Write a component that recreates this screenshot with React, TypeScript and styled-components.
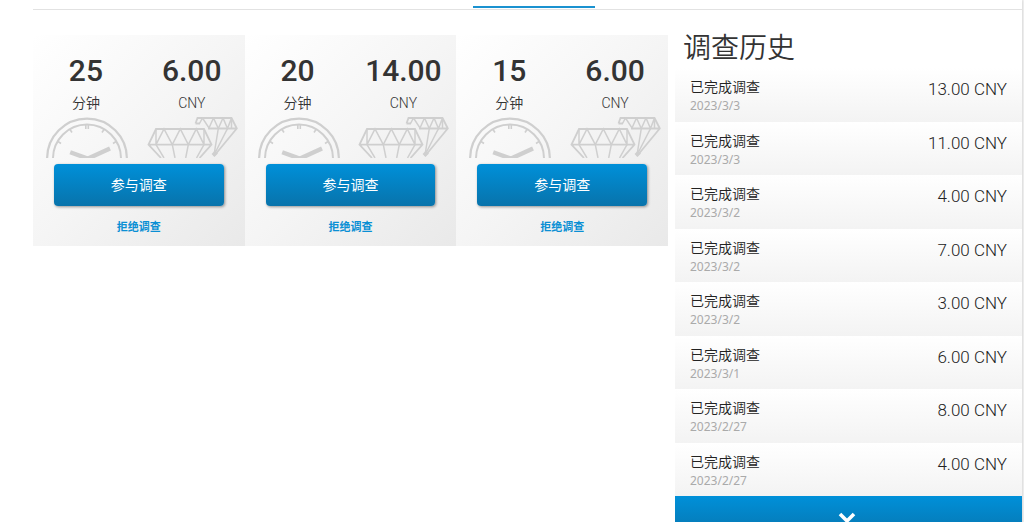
import React from "react";
import styled, { createGlobalStyle } from "styled-components";

const GlobalStyle = createGlobalStyle`
  *, *::before, *::after { box-sizing: border-box; }
  html { scrollbar-width: none; }
  body {
    margin: 0;
    background: #f4f4f4;
    color: #333;
    font-family: Roboto, "Noto Sans CJK SC", sans-serif;
    font-size: 14px;
  }
`;

const Page = styled.div`
  min-height: 100vh;
  margin-right: 2px;
  padding-left: 33px;
  background: #fff;
  box-shadow: 0 0 3px rgba(0, 0, 0, 0.2);
`;

const TabBar = styled.nav`
  display: flex;
  justify-content: center;
  height: 10px;
  padding: 6px 0 1px;
  border-bottom: 1px solid #e2e2e2;
`;

const ActiveTab = styled.a`
  width: 122px;
  height: 2px;
  margin-left: 13px;
  background: #1a92d0;
`;

const Columns = styled.main`
  display: grid;
  grid-template-columns: minmax(0, 635fr) minmax(0, 347fr);
  column-gap: 7px;
  align-items: start;
  padding-top: 20px;
`;

const CardGrid = styled.section`
  display: grid;
  grid-template-columns: repeat(3, 1fr);
  padding-top: 5px;
`;

const Card = styled.article`
  padding: 19px 0 9px;
  background: linear-gradient(135deg, #fff 0%, #f5f5f5 50%, #e9e9e9 100%);
`;

const Stats = styled.div`
  display: grid;
  grid-template-columns: 1fr 1fr;
  text-align: center;
`;

const Figure = styled.div`
  font-size: 30px;
  font-weight: 500;
  line-height: 34px;
`;

const Unit = styled.div`
  height: 29px;
  padding-top: 5px;
  font-size: 14px;
  font-weight: 350;
  line-height: 20px;
`;

const Art = styled.svg`
  display: block;
  height: 41px;
  margin: 0 auto;
  fill: none;
  stroke: #cfcfcf;
`;

const Actions = styled.div`
  display: flex;
  flex-direction: column;
  align-items: stretch;
  gap: 13px;
  padding: 6px 21px 0;
`;

const JoinButton = styled.button`
  height: 42px;
  padding: 0 0 2px;
  border: 0;
  border-radius: 4px;
  background: linear-gradient(#0090d9, #0873ab);
  box-shadow: 1px 1px 3px rgba(0, 0, 0, 0.4);
  color: #fff;
  font: inherit;
  font-size: 14px;
  cursor: pointer;
`;

const DeclineLink = styled.a`
  color: #0a8fd4;
  font-size: 11px;
  font-weight: 700;
  line-height: 18px;
  text-align: center;
  text-decoration: none;
`;

const HistoryTitle = styled.h2`
  margin: 0;
  padding-left: 8px;
  font-size: 28px;
  font-weight: 350;
  line-height: 38px;
`;

const HistoryList = styled.ul`
  display: grid;
  grid-auto-rows: 1fr;
  min-height: 428px;
  margin: 0;
  padding: 0;
  list-style: none;
`;

const HistoryRow = styled.li`
  display: flex;
  justify-content: space-between;
  padding: 9px 15px 0;
  background: linear-gradient(#fff, #f3f3f3);
`;

const EntryName = styled.div`
  color: #222;
  font-size: 14px;
  font-weight: 350;
  line-height: 20px;
`;

const EntryDate = styled.time`
  display: block;
  color: #aaa;
  font-family: "Noto Sans", sans-serif;
  font-size: 12px;
  line-height: 18px;
`;

const Amount = styled.div`
  color: #222;
  font-size: 17px;
  font-weight: 350;
  line-height: 25px;
`;

const MoreButton = styled.button`
  display: flex;
  justify-content: center;
  align-items: center;
  width: 100%;
  height: 44px;
  padding: 0 3px 0 0;
  border: 0;
  background: linear-gradient(#0090d9, #0873ab);
  cursor: pointer;
`;

const surveys = [
  { minutes: 25, reward: "6.00" },
  { minutes: 20, reward: "14.00" },
  { minutes: 15, reward: "6.00" },
];

const history = [
  { date: "2023/3/3", amount: "13.00" },
  { date: "2023/3/3", amount: "11.00" },
  { date: "2023/3/2", amount: "4.00" },
  { date: "2023/3/2", amount: "7.00" },
  { date: "2023/3/2", amount: "3.00" },
  { date: "2023/3/1", amount: "6.00" },
  { date: "2023/2/27", amount: "8.00" },
  { date: "2023/2/27", amount: "4.00" },
];

const ClockArt = () => (
  <Art width="84" viewBox="-1 0 84 41" aria-hidden="true">
    <circle cx="42" cy="41.5" r="39.9" strokeWidth="2.2" />
    <circle cx="42" cy="41.5" r="34" strokeWidth="2" />
    <path strokeWidth="1.6" d="M40.8 8v4M43.3 8v4M25 12.5l2 3M59 12.5l-2 3M13 24.5l3 2M71 24.5l-3 2" />
    <path strokeWidth="4.4" d="M25.2 35.2L44 42M65 31.5L42 42" />
  </Art>
);

const DiamondArt = () => (
  <Art width="92" viewBox="-1 0 92 41" aria-hidden="true">
    <g strokeWidth="1.8">
      <path d="M14 41L1.5 27.7L9 12H57L64.5 27.7L52.5 41M1.5 27.7H64.5" />
      <path strokeWidth="1.5" d="M9 12V27.7L17 12L25.3 27.7L33.3 12L41.3 27.7L49.3 12L57 27.7V12M9 27.7L17 41M25.3 27.7L28 41M41.3 27.7L38.7 41M57 27.7L49.5 41" />
      <path d="M48.5 6.5L50.5 1H84.5L89.8 11.5L67 39M48.5 6.5H53M61 11.5H89.8" />
      <path strokeWidth="1.5" d="M52.5 6.5L55.5 1L62 11L66.5 1L71.3 11.5L76 1L80.5 11.5L84.5 1V11.5M80.5 11.5L67 38M71.3 11.5L67 38" />
      <path strokeWidth="4" d="M69.5 35L66 38.5" />
    </g>
  </Art>
);

export default function App() {
  return (
    <>
      <GlobalStyle />
      <Page>
        <TabBar>
          <ActiveTab href="#surveys" aria-current="page" />
        </TabBar>
        <Columns>
          <CardGrid>
            {surveys.map((s) => (
              <Card key={s.minutes}>
                <Stats>
                  <div>
                    <Figure>{s.minutes}</Figure>
                    <Unit>分钟</Unit>
                    <ClockArt />
                  </div>
                  <div>
                    <Figure>{s.reward}</Figure>
                    <Unit>CNY</Unit>
                    <DiamondArt />
                  </div>
                </Stats>
                <Actions>
                  <JoinButton type="button">参与调查</JoinButton>
                  <DeclineLink href="#decline">拒绝调查</DeclineLink>
                </Actions>
              </Card>
            ))}
          </CardGrid>
          <section>
            <HistoryTitle>调查历史</HistoryTitle>
            <HistoryList>
              {history.map((h, i) => (
                <HistoryRow key={i}>
                  <div>
                    <EntryName>已完成调查</EntryName>
                    <EntryDate>{h.date}</EntryDate>
                  </div>
                  <Amount>{h.amount} CNY</Amount>
                </HistoryRow>
              ))}
            </HistoryList>
            <MoreButton type="button" aria-label="更多">
              <svg width="18" height="12" viewBox="0 0 18 12" fill="none" stroke="#fff" strokeWidth="3.6" aria-hidden="true">
                <path d="M2 2L9 9L16 2" />
              </svg>
            </MoreButton>
          </section>
        </Columns>
      </Page>
    </>
  );
}
